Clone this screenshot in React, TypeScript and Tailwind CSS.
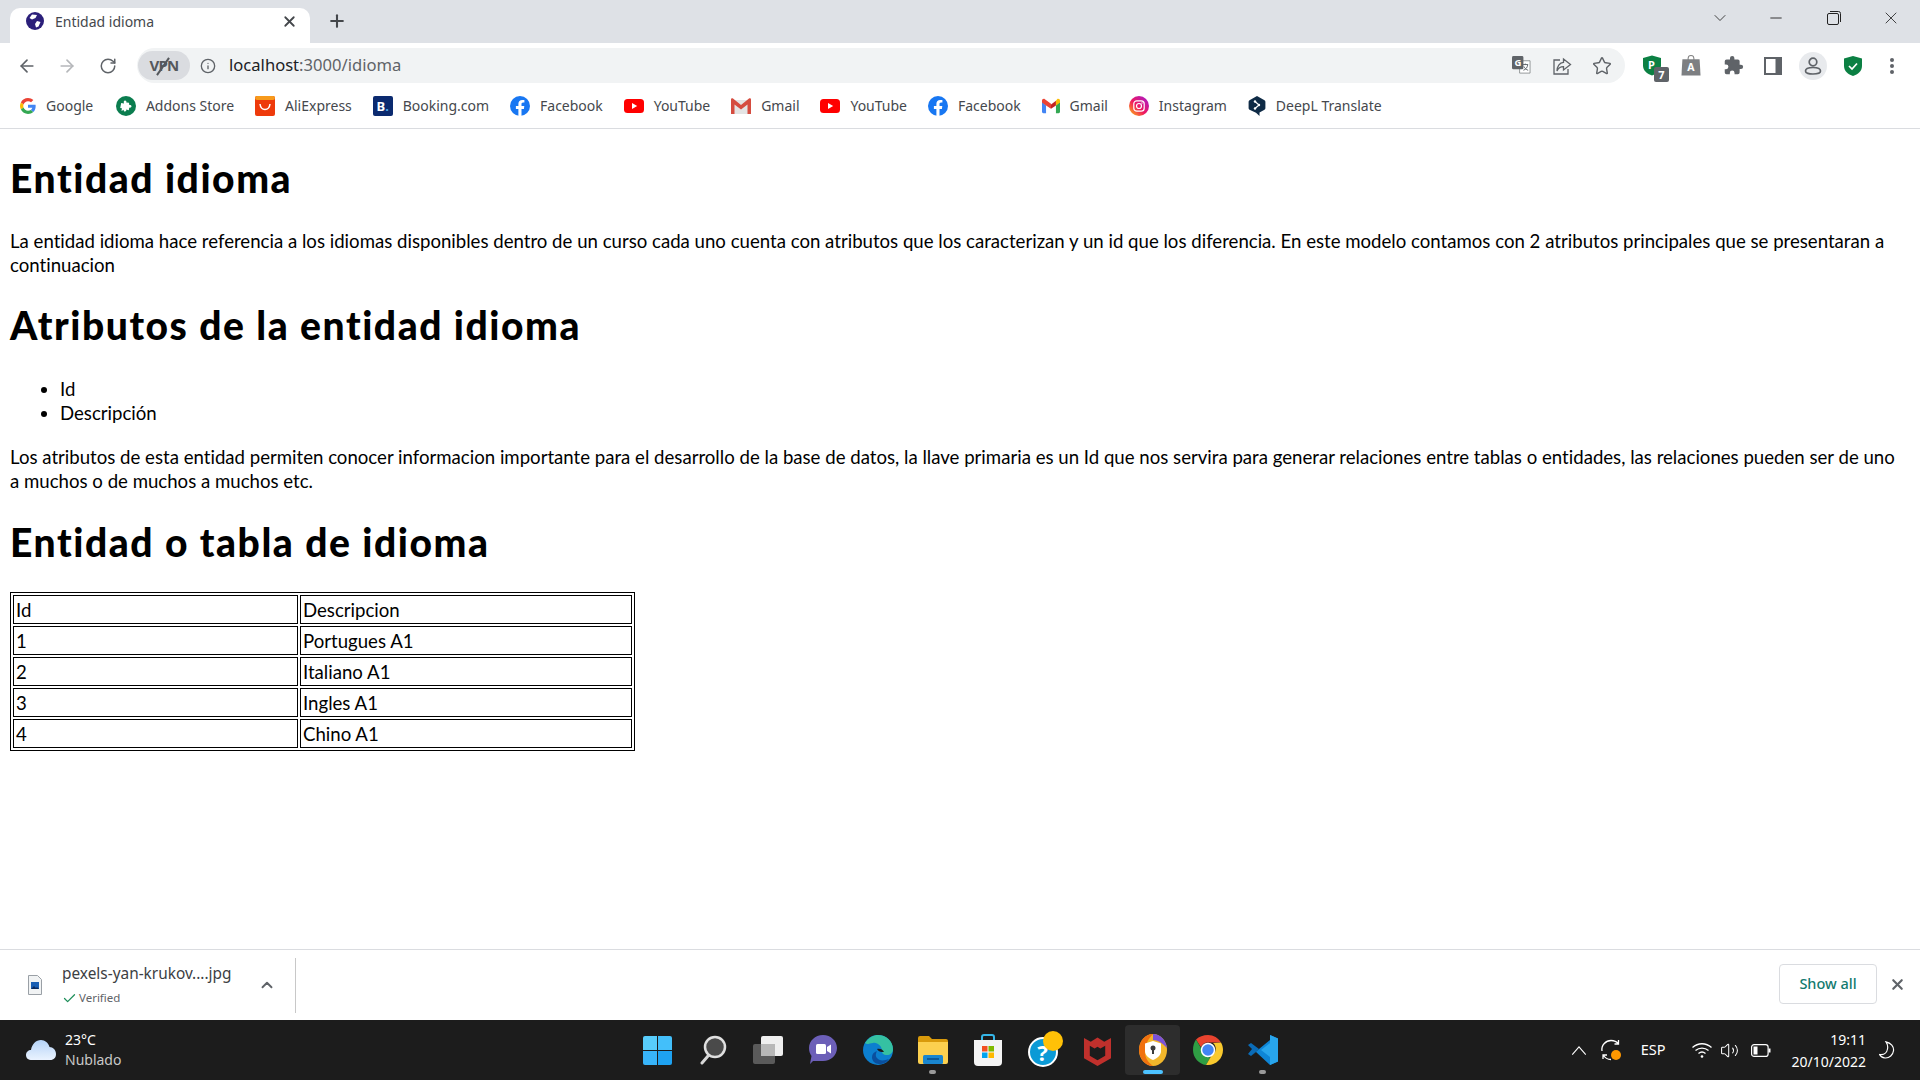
import React from 'react';
import { ArrowLeft, ArrowRight, RotateCw, Plus, X, ChevronDown, ChevronUp, Minus, Info, Star, Check, Volume2 } from 'lucide-react';

const ui = "font-['Noto_Sans',sans-serif]";
const gill = "font-['Lato',sans-serif]";

function GoogleIcon() {
  return (
    <svg viewBox="0 0 48 48" className="h-4 w-4">
      <path fill="#EA4335" d="M24 9.5c3.5 0 6.700 1.200 9.200 3.600l6.900-6.900C35.900 2.400 30.500 0 24 0 14.600 0 6.500 5.400 2.600 13.200l8 6.200C12.500 13.700 17.800 9.500 24 9.500z" />
      <path fill="#4285F4" d="M47 24.500c0-1.600-.1-3.100-.4-4.500H24v9h12.900c-.6 3-2.200 5.500-4.700 7.200l7.700 6C44.400 37.900 47 31.800 47 24.500z" />
      <path fill="#FBBC05" d="M10.600 28.600c-.5-1.400-.8-3-.8-4.600s.3-3.200.8-4.600l-8-6.200C.9 16.500 0 20.100 0 24s.9 7.500 2.600 10.800l8-6.200z" />
      <path fill="#34A853" d="M24 48c6.500 0 11.900-2.100 15.900-5.800l-7.700-6c-2.200 1.400-4.900 2.300-8.200 2.300-6.200 0-11.500-4.200-13.400-9.900l-8 6.200C6.500 42.600 14.600 48 24 48z" />
    </svg>
  );
}

function AddonsIcon() {
  return (
    <svg viewBox="0 0 20 20" className="h-5 w-5">
      <circle cx="10" cy="10" r="10" fill="#0b7d4f" />
      <path fill="#fff" d="M9 4.500c1.200 0 1.800 1 1.300 2l2.700.3.300 2.300c1-.5 2.200.1 2.200 1.200s-1.200 1.700-2.200 1.200l-.5 2.700-2.600-.6c.4 1-.3 2-1.300 2-.7 0-1.400-.7-1.200-1.800L5.500 15l.4-2.800-1.700-.2 1-5 2.800.4C7.400 5.500 8 4.500 9 4.500z" />
    </svg>
  );
}

function AliIcon() {
  return (
    <svg viewBox="0 0 20 20" className="h-5 w-5">
      <rect width="20" height="20" rx="2" fill="#ee3a0b" />
      <rect width="20" height="4" rx="2" fill="#f79a1c" />
      <path d="M5 8c.5 4 2.500 5.500 5 5.500S14.500 12 15 8" fill="none" stroke="#fff" strokeWidth="1.500" />
    </svg>
  );
}

function BookingIcon() {
  return (
    <div className={`flex h-5 w-5 items-center justify-center rounded-[2px] bg-[#0b2a6f] text-[13px] font-bold leading-none text-white ${ui}`}>
      B<span className="text-[#4aa8e8]">.</span>
    </div>
  );
}

function FacebookIcon() {
  return (
    <svg viewBox="0 0 20 20" className="h-5 w-5">
      <circle cx="10" cy="10" r="10" fill="#1877f2" />
      <path fill="#fff" d="M13.900 12.900l.4-2.900h-2.800V8.100c0-.8.400-1.600 1.600-1.600h1.300V4.100s-1.100-.2-2.200-.2c-2.300 0-3.800 1.400-3.800 3.900V10H5.900v2.900h2.500V20h3.100v-7.100z" />
    </svg>
  );
}

function YoutubeIcon() {
  return (
    <svg viewBox="0 0 20 14" className="h-[14px] w-5">
      <rect width="20" height="14" rx="3.500" fill="#ff0000" />
      <path fill="#fff" d="M8 4l5.200 3L8 10z" />
    </svg>
  );
}

function GmailOld() {
  return (
    <svg viewBox="0 0 20 16" className="h-4 w-5">
      <path fill="#e4e4e4" d="M2 2h16v14H2z" />
      <path fill="#d54c3f" d="M0 1.500C0 .5 1.200 0 2 .6L10 7l8-6.400c.8-.6 2-.1 2 .9V16h-3.500V6.500L10 11.500l-6.500-5V16H0z" />
    </svg>
  );
}

function GmailNew() {
  return (
    <svg viewBox="0 0 20 16" className="h-4 w-[18px]">
      <path fill="#4285f4" d="M0 3v11.500C0 15.300.7 16 1.500 16h3V7.500z" />
      <path fill="#34a853" d="M20 3v11.500c0 .8-.7 1.500-1.500 1.500h-3V7.500z" />
      <path fill="#ea4335" d="M4.500 7.500L0 4V2C0 .3 1.900-.6 3.200.4L10 5.500l-0 5.500z" />
      <path fill="#c5221f" d="M15.500 2.200L10 6.300V11l5.500-3.500z" />
      <path fill="#fbbc04" d="M15.500 2.200L16.800.4C18.100-.6 20 .3 20 2v2l-4.500 3.500z" />
    </svg>
  );
}

function InstagramIcon() {
  return (
    <svg viewBox="0 0 20 20" className="h-5 w-5">
      <defs>
        <linearGradient id="ig" x1="0" y1="1" x2="1" y2="0">
          <stop offset="0" stopColor="#fdc50b" />
          <stop offset="0.45" stopColor="#f0185e" />
          <stop offset="1" stopColor="#a01bd6" />
        </linearGradient>
      </defs>
      <circle cx="10" cy="10" r="10" fill="url(#ig)" />
      <rect x="4.800" y="4.800" width="10.400" height="10.400" rx="3" fill="none" stroke="#fff" strokeWidth="1.200" />
      <circle cx="10" cy="10" r="2.500" fill="none" stroke="#fff" strokeWidth="1.200" />
      <circle cx="13" cy="7" r=".7" fill="#fff" />
    </svg>
  );
}

function DeeplIcon() {
  return (
    <svg viewBox="0 0 18 20" className="h-5 w-[18px]">
      <path fill="#0f2b46" d="M9 0l7.500 4.300c.6.300.9.900.9 1.500v6.400c0 .6-.3 1.200-.9 1.500L11.500 16.600V20L8 16.700 1.500 13.700C.9 13.400.6 12.800.6 12.200V5.800c0-.6.300-1.200.9-1.500z" />
      <path d="M7 5.500l4 3.500-4 3.500" fill="none" stroke="#fff" strokeWidth="1.200" />
      <circle cx="7" cy="5.500" r="1.200" fill="#fff" />
      <circle cx="7" cy="12.500" r="1.200" fill="#fff" />
      <circle cx="11" cy="9" r="1.200" fill="#fff" />
    </svg>
  );
}

const bookmarks = [
  { name: 'Google', icon: <GoogleIcon />, labelClass: 'w-[49px]' },
  { name: 'Addons Store', icon: <AddonsIcon /> },
  { name: 'AliExpress', icon: <AliIcon /> },
  { name: 'Booking.com', icon: <BookingIcon /> },
  { name: 'Facebook', icon: <FacebookIcon /> },
  { name: 'YouTube', icon: <YoutubeIcon /> },
  { name: 'Gmail', icon: <GmailOld /> },
  { name: 'YouTube', icon: <YoutubeIcon /> },
  { name: 'Facebook', icon: <FacebookIcon /> },
  { name: 'Gmail', icon: <GmailNew /> },
  { name: 'Instagram', icon: <InstagramIcon /> },
  { name: 'DeepL Translate', icon: <DeeplIcon /> },
];

function TabBar() {
  return (
    <div className="flex h-[43px] items-end bg-[#dee1e6] pl-[10px]">
      <div className="flex h-[35px] w-[300px] items-center rounded-t-[10px] bg-white pb-[9px] pl-[16px] pr-[12px]">
        <svg viewBox="0 0 18 18" className="h-[18px] w-[18px]">
          <circle cx="9" cy="9" r="9" fill="#2b1f7a" />
          <path fill="#fff" d="M6 2.500l5 .5-1.500 3L6 7.500 3.500 6zM11 9l3.500 1-2 4.500-2.500 1-1-3.500z" />
        </svg>
        <span className={`ml-[11px] flex-1 text-[14px] text-[#45484d] ${ui}`}>Entidad idioma</span>
        <X size={17} strokeWidth={2.500} className="text-[#44474b]" />
      </div>
      <div className="mb-[12px] ml-[17px]">
        <Plus size={20} strokeWidth={2.500} className="text-[#44474b]" />
      </div>
      <div className="flex-1" />
      <div className="flex h-[36px] items-center self-start text-[#222]">
        <ChevronDown size={20} strokeWidth={1} className="mr-[37px]" />
        <Minus size={18} strokeWidth={1.200} className="mr-[42px]" />
        <svg viewBox="0 0 14 14" className="mr-[40px] h-[14px] w-[14px]" fill="none" stroke="#222" strokeWidth="1">
          <rect x=".5" y="2.500" width="11" height="11" rx="1.500" />
          <path d="M3 .5h8.500a2 2 0 0 1 2 2V11" />
        </svg>
        <X size={20} strokeWidth={1} className="mr-[19px]" />
      </div>
    </div>
  );
}

function Toolbar() {
  return (
    <div className="flex h-[43px] items-center bg-white pt-[2px]">
      <div className="flex items-center pl-[17px] text-[#5f6368]">
        <ArrowLeft size={20} strokeWidth={2} />
        <ArrowRight size={20} strokeWidth={2} className="ml-[20px] text-[#b5b7ba]" />
        <RotateCw size={18} strokeWidth={2} className="ml-[22px]" />
      </div>
      <div className="ml-[20px] flex h-[35px] w-[1488px] items-center rounded-full bg-[#f1f3f4]">
        <div className={`ml-[1px] flex h-[29px] w-[52px] items-center justify-center rounded-full bg-[#dadce0] text-[15px] font-bold tracking-tighter text-[#55585c] ${ui}`}>
          <span className="relative">
            VPN
            <span className="absolute left-[13px] top-[2px] h-[21px] w-[2px] rotate-[35deg] bg-[#55585c]" />
          </span>
        </div>
        <Info size={16} strokeWidth={2} className="ml-[10px] text-[#5f6368]" />
        <span className={`ml-[13px] flex-1 text-[16.600px] leading-none text-[#5f6368] ${ui}`}>
          <span className="text-[#202124]">localhost</span>:3000/idioma
        </span>
        <svg viewBox="0 0 20 20" className="h-[19px] w-[19px]">
          <path fill="#fff" stroke="#7a7d80" strokeWidth=".8" d="M8 5h11v13H8z" />
          <rect x="0" y="0" width="12" height="14" rx="1.500" fill="#5f6368" />
          <text x="2.500" y="11" fontSize="10" fontWeight="700" fill="#fff">G</text>
          <path d="M11 9h6M14 8v1.500M12 15c3-1 4-3 4.500-5.500M12.500 11c1 2 2.500 3.500 4.500 4" stroke="#5f6368" strokeWidth="1" fill="none" />
        </svg>
        <svg viewBox="0 0 20 20" className="ml-[21px] h-[20px] w-[20px]" fill="none" stroke="#5f6368" strokeWidth="1.300">
          <path d="M8 4H2v14h14v-5" />
          <path d="M11.500 3l7 5.500-7 5.500v-3.300C8 10.700 6 12.500 5 15c0-4.500 2.500-8.500 6.500-8.700z" />
        </svg>
        <Star size={20} strokeWidth={1.700} className="ml-[20px] text-[#5f6368]" />
        <div className="w-[13px]" />
      </div>
      <div className="flex flex-1 items-center pl-[18px]">
        <div className="relative h-[22px] w-[20px]">
          <svg viewBox="0 0 18 20" className="h-[21px] w-[18px]">
            <path fill="#0b8043" d="M9 0l9 2.500V10c0 5-4 8.500-9 10-5-1.500-9-5-9-10V2.500z" />
            <text x="5" y="13" fontSize="11" fontWeight="700" fill="#fff">P</text>
          </svg>
          <div className={`absolute left-[11px] top-[12px] flex h-[15px] w-[15px] items-center justify-center rounded-[2px] bg-[#5f6368] text-[11px] font-bold leading-none text-white ${ui}`}>7</div>
        </div>
        <svg viewBox="0 0 20 22" className="ml-[18px] h-[21px] w-[20px]">
          <path d="M7 6V3.500a3 3 0 0 1 6 0V6" fill="none" stroke="#8a8a8a" strokeWidth="1.200" />
          <path fill="#7d7f82" d="M1 4.500h18l1 17H0z" />
          <text x="6" y="17" fontSize="11" fontWeight="700" fill="#fff">A</text>
        </svg>
        <svg viewBox="0 0 24 24" className="ml-[22px] h-[21px] w-[21px]" fill="#5f6368">
          <path d="M20.500 11H19V7a2 2 0 0 0-2-2h-4V3.500a2.500 2.500 0 0 0-5 0V5H4a2 2 0 0 0-2 2v3.800h1.500a2.700 2.700 0 0 1 0 5.400H2V20a2 2 0 0 0 2 2h3.800v-1.500a2.700 2.700 0 0 1 5.400 0V22H17a2 2 0 0 0 2-2v-4h1.500a2.500 2.500 0 0 0 0-5z" />
        </svg>
        <svg viewBox="0 0 18 18" className="ml-[20px] h-[18px] w-[18px]">
          <rect width="18" height="18" fill="#5f6368" />
          <rect x="2" y="2" width="9.500" height="14" fill="#fff" />
        </svg>
        <div className="ml-[17px] flex h-[28px] w-[28px] items-center justify-center rounded-full bg-[#e8eaed]">
          <svg viewBox="0 0 20 20" className="h-[20px] w-[20px]" fill="none" stroke="#5f6368" strokeWidth="1.700">
            <circle cx="10" cy="6" r="3.800" />
            <path d="M2.500 15c0-2.500 3.500-3.500 7.500-3.500s7.500 1 7.500 3.500-3.500 3-7.500 3-7.500-.5-7.500-3z" />
          </svg>
        </div>
        <svg viewBox="0 0 18 20" className="ml-[17px] h-[20px] w-[18px]">
          <path fill="#0b8043" d="M9 0l9 2.500V10c0 5-4 8.500-9 10-5-1.500-9-5-9-10V2.500z" />
          <path d="M5 10l3 3 5-5.500" fill="none" stroke="#fff" strokeWidth="1.700" />
        </svg>
        <svg viewBox="0 0 4 16" className="ml-[28px] h-[16px] w-[4px]" fill="#5f6368">
          <circle cx="2" cy="2" r="2" />
          <circle cx="2" cy="8" r="2" />
          <circle cx="2" cy="14" r="2" />
        </svg>
      </div>
    </div>
  );
}

function BookmarksBar() {
  return (
    <div className="flex h-[43px] items-center gap-[20.900px] border-b border-[#dadce0] bg-white pb-[2px] pl-[20px]">
      {bookmarks.map((b, idx) => (
        <div key={`bm-${idx}`} className="flex items-center gap-[10px]">
          <div className="flex items-center justify-center">{b.icon}</div>
          <span className={`whitespace-nowrap text-[14px] leading-none text-[#45484d] ${ui} ${b.labelClass ?? ''}`}>{b.name}</span>
        </div>
      ))}
    </div>
  );
}

const rows = [
  ['Id', 'Descripcion'],
  ['1', 'Portugues A1'],
  ['2', 'Italiano A1'],
  ['3', 'Ingles A1'],
  ['4', 'Chino A1'],
];

function PageContent() {
  return (
    <div className={`min-h-0 flex-1 overflow-hidden bg-white px-[10px] text-black [font-variant-ligatures:none] ${gill}`}>
      <h1 className="mt-[26px] text-[39px] font-black leading-[46px] tracking-[1.550px]">Entidad idioma</h1>
      <p className="mt-[28px] text-[18.630px] leading-[24px]">
        La entidad idioma hace referencia a los idiomas disponibles dentro de un curso cada uno cuenta con atributos que los caracterizan y un id que los diferencia. En este modelo contamos con 2 atributos principales que se presentaran a continuacion
      </p>
      <h2 className="mt-[25px] text-[39px] font-black leading-[46px] tracking-[1.550px]">Atributos de la entidad idioma</h2>
      <ul className="mt-[29px] list-disc pl-[50px] text-[18.630px] leading-[24px]">
        <li>Id</li>
        <li>Descripción</li>
      </ul>
      <p className="mt-[20px] text-[18.630px] leading-[24px]">
        Los atributos de esta entidad permiten conocer informacion importante para el desarrollo de la base de datos, la llave primaria es un Id que nos servira para generar relaciones entre tablas o entidades, las relaciones pueden ser de uno
        <br />
        a muchos o de muchos a muchos etc.
      </p>
      <h3 className="mt-[26px] text-[39px] font-black leading-[46px] tracking-[1.550px]">Entidad o tabla de idioma</h3>
      <table className="mt-[27px] w-[625px] table-fixed border-separate border-spacing-[2px] border border-black text-[18.630px] leading-[24px]">
        <tbody>
          {rows.map((r, idx) => (
            <tr key={`row-${idx}`}>
              <td className="h-[29px] w-[285px] border border-black p-[1px] pl-[2px]">{r[0]}</td>
              <td className="h-[29px] border border-black p-[1px] pl-[2px]">{r[1]}</td>
            </tr>
          ))}
        </tbody>
      </table>
    </div>
  );
}

function DownloadBar() {
  return (
    <div className="flex h-[71px] items-center border-t border-[#dadce0] bg-white">
      <svg viewBox="0 0 14 20" className="ml-[28px] h-[20px] w-[14px]">
        <path fill="#f1f3f4" stroke="#9aa0a6" d="M.5.5h9l4 4v15H.5z" />
        <rect x="3" y="7" width="8" height="7" fill="#1a5fb4" />
        <path fill="#0b2a5e" d="M3 14l3-3 2 2 1-1 2 2z" />
      </svg>
      <div className={`ml-[20px] flex w-[190px] flex-col ${ui}`}>
        <span className="whitespace-nowrap text-[15.400px] leading-[20px] text-[#3c4043]">pexels-yan-krukov....jpg</span>
        <span className="mt-[6px] flex items-center text-[11.500px] leading-[16px] text-[#5f6368]">
          <Check size={15} strokeWidth={2} className="mr-[2px] text-[#1e8e5a]" />
          Verified
        </span>
      </div>
      <ChevronUp size={18} strokeWidth={2.500} className="ml-[6px] text-[#5f6368]" />
      <div className="ml-[19px] h-[55px] w-px bg-[#c8c8c8]" />
      <div className="flex-1" />
      <div className={`mb-[3px] flex h-[40px] w-[98px] items-center justify-center rounded-[4px] border border-[#dadce0] text-[14.500px] font-medium text-[#137a6f] ${ui}`}>Show all</div>
      <X size={17} strokeWidth={3} className="mb-[2px] ml-[12px] mr-[14px] text-[#5f6368]" />
    </div>
  );
}

function TaskIcon({ children, active, dot }: { children: React.ReactNode; active?: boolean; dot?: boolean }) {
  return (
    <div className={`relative flex h-[50px] w-[55px] items-center justify-center rounded-[4px] ${active ? 'bg-[#2d2d2d]' : ''}`}>
      {children}
      {dot && <span className="absolute bottom-[1px] h-[4px] w-[7px] rounded-full bg-[#9a9a9a]" />}
      {active && <span className="absolute bottom-[1px] h-[4px] w-[20px] rounded-full bg-[#4cc2ff]" />}
    </div>
  );
}

function Taskbar() {
  return (
    <div className={`flex h-[60px] bg-[#1c1c1c] text-white ${ui}`}>
      <div className="flex w-[630px] items-center pl-[26px]">
        <svg viewBox="0 0 30 20" className="h-[20px] w-[30px]">
          <defs>
            <linearGradient id="cloud" x1="0" y1="0" x2="0" y2="1">
              <stop offset="0" stopColor="#b5d3f7" />
              <stop offset="1" stopColor="#eaf3ff" />
            </linearGradient>
          </defs>
          <path fill="url(#cloud)" d="M6 20C2 20 0 18 0 15s2.500-5 5-5C6 4 10 0 15 0c4 0 7.500 3 8.500 7 3.500 0 6.500 3 6.500 7 0 3.500-2 6-6 6z" />
        </svg>
        <div className="ml-[9px] flex flex-col">
          <span className="text-[14px] leading-[20px]">23°C</span>
          <span className="text-[14px] leading-[20px] text-[#c8c8c8]">Nublado</span>
        </div>
      </div>
      <div className="flex w-[660px] items-center">
        <TaskIcon>
          <div className="grid h-[29px] w-[29px] grid-cols-2 gap-[1px]">
            <div className="rounded-tl-[2px] bg-[#58cdfb]" />
            <div className="rounded-tr-[2px] bg-[#43bffa]" />
            <div className="rounded-bl-[2px] bg-[#38b4f9]" />
            <div className="rounded-br-[2px] bg-[#1ea2f1]" />
          </div>
        </TaskIcon>
        <TaskIcon>
          <svg viewBox="0 0 28 30" className="h-[30px] w-[28px]">
            <circle cx="16" cy="12" r="10" fill="#4a4a4a" stroke="#e0e0e0" strokeWidth="2.500" />
            <path d="M9 21l-6 7" stroke="#d8d8d8" strokeWidth="3" strokeLinecap="round" />
          </svg>
        </TaskIcon>
        <TaskIcon>
          <div className="relative h-[28px] w-[30px]">
            <div className="absolute bottom-0 left-0 h-[20px] w-[22px] rounded-[2px] bg-[#5a5a5a]" />
            <div className="absolute right-0 top-0 h-[20px] w-[22px] rounded-[2px] bg-[#efefef]" />
            <div className="absolute left-[8px] top-[8px] h-[12px] w-[14px] bg-[#b8b8b8]" />
          </div>
        </TaskIcon>
        <TaskIcon>
          <svg viewBox="0 0 28 30" className="h-[30px] w-[28px]">
            <path fill="#6c5fb8" d="M14 0c8 0 14 6 14 13s-6 13-14 13H4l-3 3 1.500-8C.8 18.500 0 16 0 13 0 6 6 0 14 0z" />
            <rect x="7" y="9" width="10" height="10" rx="1.500" fill="#fff" />
            <path fill="#fff" d="M18 12l4-2.500v9L18 16z" />
          </svg>
        </TaskIcon>
        <TaskIcon>
          <svg viewBox="0 0 30 30" className="h-[30px] w-[30px]">
            <circle cx="15" cy="15" r="15" fill="#0c7fcf" />
            <path fill="#35c1a2" d="M2 8C6 2 11 0 15 0c8 0 15 6 15 14 0 4-3 6-6 6-4 0-5-2-5-4 0-5-5-9-9-8-4 .5-6 2-8 0z" />
            <path fill="#0a4f9e" d="M9 22c0 4 3 7 7 7 5 0 8-2 10-5-5 2-10 2-12-1-2-2-1-5 0-7-3 1-5 3-5 6z" />
            <path fill="#1c1c1c" d="M19 17c-2 0-4-1-5-3 2-1 6 0 7 3z" />
          </svg>
        </TaskIcon>
        <TaskIcon dot>
          <svg viewBox="0 0 30 28" className="h-[28px] w-[30px]">
            <path fill="#d99a0b" d="M0 2a2 2 0 0 1 2-2h9l3 3h14a2 2 0 0 1 2 2v4H0z" />
            <path fill="#fcd04f" d="M0 6h30v20a2 2 0 0 1-2 2H2a2 2 0 0 1-2-2z" />
            <rect x="5" y="19" width="20" height="9" rx="1.500" fill="#1a86cf" />
            <rect x="9" y="22" width="12" height="2" fill="#0c5a9a" />
          </svg>
        </TaskIcon>
        <TaskIcon>
          <svg viewBox="0 0 30 32" className="h-[32px] w-[30px]">
            <path d="M9 8V3a2 2 0 0 1 2-2h8a2 2 0 0 1 2 2v5" fill="none" stroke="#35b6e8" strokeWidth="2" />
            <path fill="#f4f4f4" d="M1 6h28v22a4 4 0 0 1-4 4H5a4 4 0 0 1-4-4z" />
            <rect x="9" y="12" width="5.500" height="5.500" fill="#f25022" />
            <rect x="15.500" y="12" width="5.500" height="5.500" fill="#7fba00" />
            <rect x="9" y="18.500" width="5.500" height="5.500" fill="#00a4ef" />
            <rect x="15.500" y="18.500" width="5.500" height="5.500" fill="#ffb900" />
          </svg>
        </TaskIcon>
        <TaskIcon>
          <div className="relative h-[34px] w-[34px]">
            <div className="absolute bottom-0 left-[2px] flex h-[30px] w-[30px] items-center justify-center rounded-full border-[2px] border-white bg-[#0b9ad6] text-[22px] font-bold leading-none text-white">?</div>
            <div className="absolute right-[-3px] top-[-2px] h-[20px] w-[20px] rounded-full bg-[#ffc107]" />
          </div>
        </TaskIcon>
        <TaskIcon>
          <svg viewBox="0 0 28 32" className="h-[31px] w-[27px]">
            <path fill="#c0302c" d="M0 3l7 4 7-4.500L21 7l7-4v21l-14 8-14-8zM6 11v10.500l8 4.500 8-4.500V11l-5 3-3-2-3 2z" />
          </svg>
        </TaskIcon>
        <TaskIcon active>
          <svg viewBox="0 0 28 32" className="h-[32px] w-[28px]">
            <ellipse cx="14" cy="16" rx="14" ry="16" fill="#f2b72b" />
            <path fill="#7b52d8" d="M14 0c7 0 13 6 14 14-4-4-8-8-14-8z" />
            <path fill="#f0710f" d="M14 0C6 0 0 7 0 16c0 8 6 16 14 16-5-4-8-8-8-14 0-7 3-13 8-18z" />
            <path fill="#fff" d="M14 7l8 2.500V17c0 4-3 7-8 9-5-2-8-5-8-9V9.500z" />
            <circle cx="14" cy="14" r="2.500" fill="#3b3b3b" />
            <rect x="13" y="15" width="2" height="5" fill="#3b3b3b" />
          </svg>
        </TaskIcon>
        <TaskIcon>
          <svg viewBox="0 0 30 30" className="h-[30px] w-[30px]">
            <path fill="#e8432e" d="M15 0c5.500 0 10.500 3 13 7.500H15a7.500 7.500 0 0 0-7 4.800L3 4.500C6 1.700 10.300 0 15 0z" />
            <path fill="#2f9e44" d="M3 4.500l6.500 11a6.500 6.500 0 0 0 8.200 6.500L13 30C5.700 29 0 22.700 0 15c0-4 1.100-7.700 3-10.500z" />
            <path fill="#f9c92e" d="M28 7.500c1.300 2.200 2 4.800 2 7.500 0 8.300-6.700 15-15 15h-2l5.500-9.500A7.500 7.500 0 0 0 20 8z" />
            <circle cx="15" cy="15" r="6.500" fill="#4285f4" stroke="#fff" strokeWidth="1.500" />
          </svg>
        </TaskIcon>
        <TaskIcon dot>
          <svg viewBox="0 0 30 30" className="h-[30px] w-[30px]">
            <path fill="#0a6cb8" d="M0 10l3-2 8 6-8 7-3-2 4-5z" />
            <path fill="#0e85d6" d="M22 0l8 3.500v23L22 30 8 17l-5 4 8-7 11-9z" />
            <path fill="#28a5ec" d="M22 0l8 3.500v23L22 30V8l-9 7 9 7z" />
          </svg>
        </TaskIcon>
      </div>
      <div className="flex w-[630px] items-center justify-end pr-[25px] text-[14px]">
        <svg viewBox="0 0 16 10" className="mr-[13px] h-[9px] w-[16px]" fill="none" stroke="#fff" strokeWidth="1.200">
          <path d="M.5 9.500L8 1l7.500 8.500" />
        </svg>
        <svg viewBox="0 0 22 22" className="mr-[19px] h-[22px] w-[22px]" fill="none" stroke="#fff" strokeWidth="1.300">
          <path d="M2 12C1 6 6 1.500 11 1.500c3 0 6 1.500 7.500 3.500M18.500 1v4h-4M3 20v-4h4M3 16c2 3 5 4.500 8 4.500" />
          <circle cx="16" cy="16" r="5" fill="#ff9800" stroke="none" />
        </svg>
        <span className="mr-[26px] text-[14.500px]">ESP</span>
        <svg viewBox="0 0 20 16" className="mr-[8px] h-[16px] w-[20px]" fill="none" stroke="#fff" strokeWidth="1.300">
          <path d="M.5 5.500c5.500-5 13.500-5 19 0M3.500 8.500c3.700-3.300 9.300-3.300 13 0M6.500 11.500c2-1.700 5-1.700 7 0" />
          <circle cx="10" cy="14.500" r="1.300" fill="#fff" stroke="none" />
        </svg>
        <Volume2 size={19} strokeWidth={1.300} className="mr-[12px]" />
        <svg viewBox="0 0 20 13" className="mr-[21px] h-[13px] w-[20px]" fill="none" stroke="#fff" strokeWidth="1.200">
          <rect x=".6" y=".6" width="16.500" height="11.800" rx="2.500" />
          <rect x="2.500" y="2.500" width="4" height="8" fill="#fff" stroke="none" />
          <path d="M18.500 4.500v4" strokeWidth="2" />
        </svg>
        <div className="flex flex-col items-end">
          <span className="text-[14px] leading-[23px]">19:11</span>
          <span className="text-[14px] leading-[22px]">20/10/2022</span>
        </div>
        <svg viewBox="0 0 16 18" className="ml-[13px] h-[18px] w-[16px]" fill="none" stroke="#fff" strokeWidth="1.200">
          <path d="M7 .8c5 1 8 5 7.500 9-.5 4-4 7.500-8.500 7.200-2.500-.2-4.500-1.500-5.500-3.500 4 .5 7.500-1.500 8-5.500C9 5.500 8.500 3 7 .8z" />
        </svg>
      </div>
    </div>
  );
}

export default function App() {
  return (
    <div className="flex h-screen w-full flex-col overflow-hidden bg-white">
      <TabBar />
      <Toolbar />
      <BookmarksBar />
      <PageContent />
      <DownloadBar />
      <Taskbar />
    </div>
  );
}
